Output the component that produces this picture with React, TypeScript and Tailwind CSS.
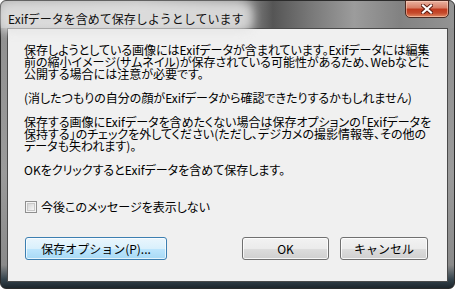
import React from "react";

function CloseGlyph() {
  return (
    <svg width="12" height="10" viewBox="0 0 12 10">
      <path d="M2 1.5 L10 8.5 M10 1.5 L2 8.5" stroke="#5a1a10" strokeWidth="4" strokeLinecap="square" />
      <path d="M2 1.5 L10 8.5 M10 1.5 L2 8.5" stroke="#ffffff" strokeWidth="2.2" strokeLinecap="square" />
    </svg>
  );
}

export default function App() {
  return (
    <div className="w-[455px] h-[289px] overflow-hidden">
      <div className="w-[455px] h-[289px] flex flex-col rounded-[6px] border border-[#2b2b2b] bg-[linear-gradient(to_bottom,#8e8e8e_0%,#9b9b9b_60%,#8a8a8a_92%,#34434c_97%,#1d262c_100%)] font-['Noto_Sans_CJK_JP','Noto_Sans',sans-serif]">
        <div className="h-[27px] flex items-start justify-between pl-[7px] pr-[5px] rounded-t-[6px] bg-[linear-gradient(to_right,#b2b2b2_0%,#bdbdbd_30%,#9c9c9c_52%,#555555_60%,#777777_68%,#9c9c9c_78%,#828282_88%,#939393_100%)]">
          <div className="relative mt-[4px]">
            <div className="absolute inset-x-[-10px] inset-y-[-3px] rounded-[10px] bg-[#e4e4e4]/80 blur-[5px]" />
            <span className="relative text-[12px] leading-[16px] text-[#111] whitespace-nowrap">Exifデータを含めて保存しようとしています</span>
          </div>
          <div className="w-[44px] h-[18px] mt-[-1px] flex items-center justify-center rounded-b-[5px] border border-[#4b2a22] shadow-[inset_0_0_0_1px_rgba(255,220,200,0.5)] bg-[linear-gradient(to_bottom,#e9b1a0_0%,#d88068_42%,#c13a1e_52%,#c54a2c_75%,#e08a66_100%)]">
            <CloseGlyph />
          </div>
        </div>
        <div className="flex-1 mx-[6px] mb-[6px] border border-[#4a4a4a] bg-[#f0f0f0] flex flex-col">
          <div className="flex flex-col pl-[16px] pt-[15px] text-[12px] leading-[12px] text-black [font-feature-settings:'palt']">
            <p className="whitespace-nowrap">
              保存しようとしている画像にはExifデータが含まれています。Exifデータには編集
              <br />
              前の縮小イメージ(サムネイル)が保存されている可能性があるため、Webなどに
              <br />
              公開する場合には注意が必要です。
            </p>
            <p className="whitespace-nowrap mt-[12px]">(消したつもりの自分の顔がExifデータから確認できたりするかもしれません)</p>
            <p className="whitespace-nowrap mt-[12px]">
              保存する画像にExifデータを含めたくない場合は保存オプションの「Exifデータを
              <br />
              保持する」のチェックを外してください(ただし、デジカメの撮影情報等、その他の
              <br />
              データも失われます)。
            </p>
            <p className="whitespace-nowrap mt-[12px]">OKをクリックするとExifデータを含めて保存します。</p>
            <div className="flex items-center gap-[4px] mt-[24px] ml-[1px]">
              <div className="w-[12px] h-[12px] border border-[#8f8f8f] bg-[#f4f4f4] flex items-center justify-center">
                <div className="w-[8px] h-[8px] bg-[linear-gradient(135deg,#d6d6d6,#f6f6f6)] border border-[#c8c8c8]" />
              </div>
              <span className="text-[12px] leading-[14px]">今後このメッセージを表示しない</span>
            </div>
          </div>
          <div className="flex items-center mt-[23px] pl-[17px] pr-[19px]">
            <div className="w-[142px] h-[23px] rounded-[3px] border border-[#3c7fb1] shadow-[inset_0_0_0_1px_rgba(255,255,255,0.7)] bg-[linear-gradient(to_bottom,#eaf6fd_0%,#d9f0fc_50%,#bee6fd_51%,#a7d9f5_100%)] flex items-center justify-center text-[12px] text-black">
              保存オプション(P)...
            </div>
            <div className="flex-1" />
            <div className="w-[87px] h-[23px] rounded-[3px] border border-[#707070] shadow-[inset_0_0_0_1px_rgba(255,255,255,0.8)] bg-[linear-gradient(to_bottom,#f2f2f2_0%,#ebebeb_50%,#dddddd_51%,#cfcfcf_100%)] flex items-center justify-center text-[12px] text-black">
              OK
            </div>
            <div className="w-[88px] h-[23px] ml-[11px] rounded-[3px] border border-[#707070] shadow-[inset_0_0_0_1px_rgba(255,255,255,0.8)] bg-[linear-gradient(to_bottom,#f2f2f2_0%,#ebebeb_50%,#dddddd_51%,#cfcfcf_100%)] flex items-center justify-center text-[12px] text-black">
              キャンセル
            </div>
          </div>
        </div>
      </div>
    </div>
  );
}
